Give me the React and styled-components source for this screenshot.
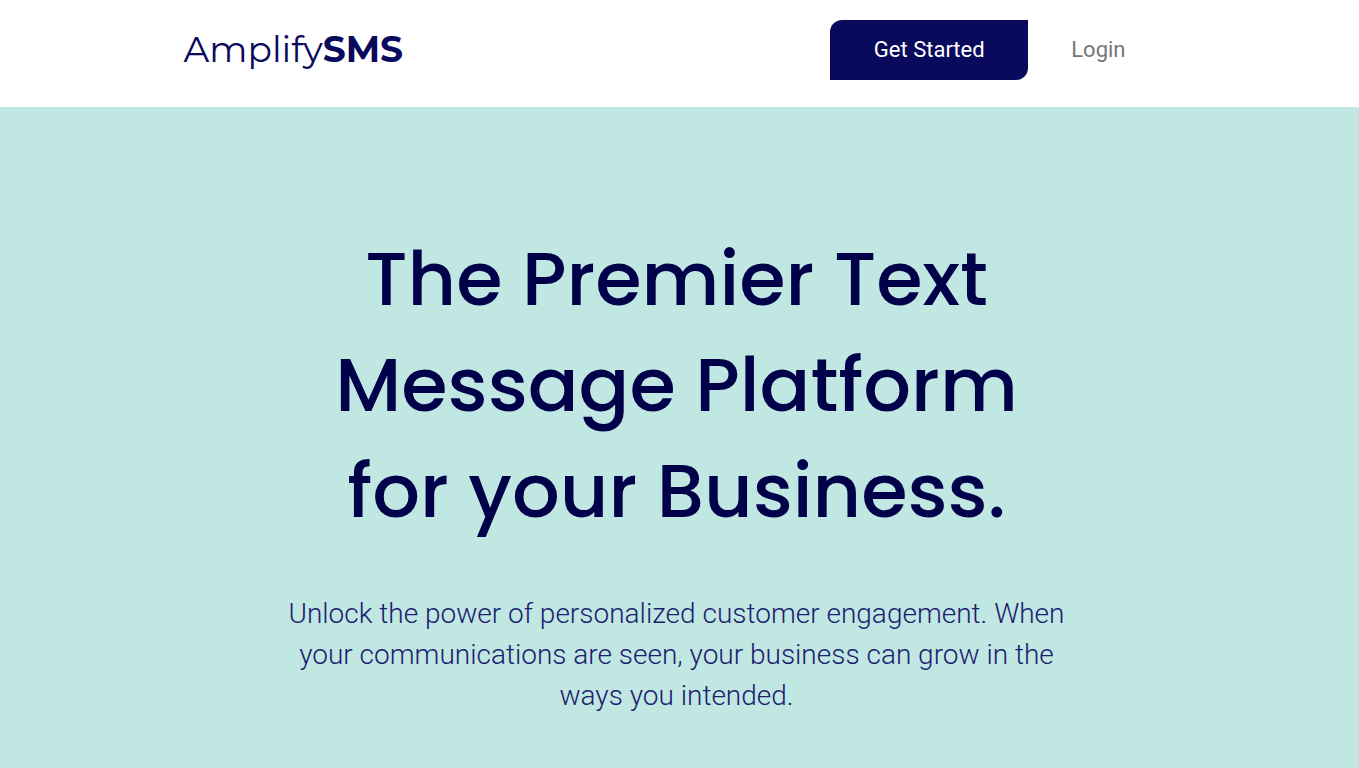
import React from "react";
import styled, { createGlobalStyle } from "styled-components";

const GlobalStyle = createGlobalStyle`
  * { box-sizing: border-box; }
  body { margin: 0; background: #c1e7e2; font-family: Roboto, "Liberation Sans", sans-serif; }
`;

const Header = styled.header`
  background: #ffffff;
  padding: 20px 16px 27px;
`;

const Bar = styled.div`
  max-width: 992px;
  margin: 0 auto;
  display: flex;
  align-items: center;
  justify-content: space-between;
`;

const Brand = styled.a`
  padding-bottom: 2px;
  font-family: Montserrat, Inter, sans-serif;
  font-size: 36px;
  line-height: 44px;
  color: #0a0a5c;
  text-decoration: none;
`;

const BrandStrong = styled.span`
  font-weight: 700;
`;

const Nav = styled.nav`
  display: flex;
  align-items: center;
  gap: 43px;
  padding-right: 50px;
`;

const StartButton = styled.button`
  width: 198px;
  height: 60px;
  border: 0;
  border-radius: 12px 0 12px 0;
  background: #0a0a5c;
  color: #ffffff;
  font: 400 22px/28px Roboto, sans-serif;
  cursor: pointer;
`;

const LoginLink = styled.a`
  color: #76767c;
  font-size: 22px;
  line-height: 28px;
  text-decoration: none;
`;

const Hero = styled.main`
  display: flex;
  flex-direction: column;
  align-items: center;
  gap: 49px;
  padding: 119px 30px 52px 24px;
  text-align: center;
`;

const Title = styled.h1`
  max-width: 760px;
  margin: 0;
  color: #01014a;
  font: 500 75px/106px Poppins, Lato, sans-serif;
`;

const Line = styled.span`
  display: block;
`;

const Lead = styled.p`
  margin: 0;
  color: #1c2070;
  font-size: 28px;
  font-weight: 300;
  line-height: 41px;
`;

export default function App() {
  return (
    <>
      <GlobalStyle />
      <Header>
        <Bar>
          <Brand href="#">Amplify<BrandStrong>SMS</BrandStrong></Brand>
          <Nav>
            <StartButton type="button">Get Started</StartButton>
            <LoginLink href="#login">Login</LoginLink>
          </Nav>
        </Bar>
      </Header>
      <Hero>
        <Title>
          <Line>The Premier Text</Line>
          <Line>Message Platform</Line>
          <Line>for your Business.</Line>
        </Title>
        <Lead>
          <Line>Unlock the power of personalized customer engagement. When</Line>
          <Line>your communications are seen, your business can grow in the</Line>
          <Line>ways you intended.</Line>
        </Lead>
      </Hero>
    </>
  );
}
